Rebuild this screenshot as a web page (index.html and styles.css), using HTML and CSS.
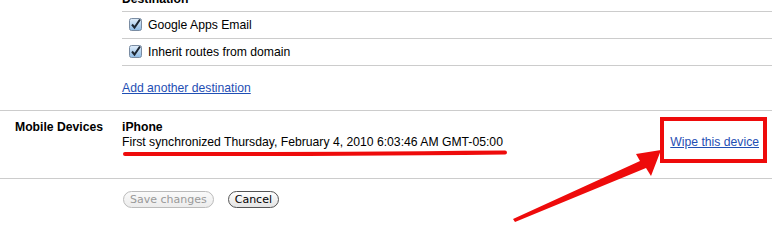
FILE: index.html
```html
<!DOCTYPE html>
<html lang="en">
<head>
    <meta charset="UTF-8">
    <title>Mobile Devices - Settings</title>
    <link rel="stylesheet" href="styles.css">
</head>
<body>
    <div class="page">
        <div class="section section-dest">
            <div class="label"></div>
            <div class="content">
                <div class="dest-head">Destination</div>
                <div class="dest-row">
                    <svg class="check" width="13" height="13" viewBox="0 0 13 13">
                        <defs>
                            <linearGradient id="cb" x1="0" y1="0" x2="0" y2="1">
                                <stop offset="0" stop-color="#e2eefa"/>
                                <stop offset="1" stop-color="#8dbbe6"/>
                            </linearGradient>
                        </defs>
                        <rect x="0.5" y="0.5" width="12" height="12" rx="2" fill="url(#cb)" stroke="#7a8ca2"/>
                        <path d="M3 6.5 L5.5 9.5 L11 1.5" fill="none" stroke="#1d2733" stroke-width="2"/>
                    </svg>
                    <span>Google Apps Email</span>
                </div>
                <div class="dest-row">
                    <svg class="check" width="13" height="13" viewBox="0 0 13 13">
                        <rect x="0.5" y="0.5" width="12" height="12" rx="2" fill="url(#cb)" stroke="#7a8ca2"/>
                        <path d="M3 6.5 L5.5 9.5 L11 1.5" fill="none" stroke="#1d2733" stroke-width="2"/>
                    </svg>
                    <span>Inherit routes from domain</span>
                </div>
                <div class="add-row">
                    <a href="#">Add another destination</a>
                </div>
            </div>
        </div>

        <div class="section section-mobile">
            <div class="label">Mobile Devices</div>
            <div class="content device">
                <div class="device-info">
                    <div class="device-name">iPhone</div>
                    <div>First synchronized Thursday, February 4, 2010 6:03:46 AM GMT-05:00</div>
                </div>
                <a class="wipe" href="#">Wipe this device</a>
            </div>
        </div>

        <div class="actions">
            <button class="btn" disabled>Save changes</button>
            <button class="btn">Cancel</button>
        </div>
    </div>

    <!-- annotation drawn over the screenshot -->
    <svg class="markup" width="772" height="248" viewBox="0 0 772 248">
        <path d="M125 154 Q300 154.5 505 152.5" fill="none" stroke="#ee0b0b" stroke-width="4" stroke-linecap="round"/>
        <rect x="662" y="119" width="103" height="42" fill="none" stroke="#ee0b0b" stroke-width="4"/>
        <polygon points="513,219 640,161 636,154 661,150 651,176 646,168 515,222" fill="#ee0b0b"/>
    </svg>
</body>
</html>
```

FILE: styles.css
```css
body {
    margin: 0;
    background: white;
    font-family: "Liberation Sans", Arial, sans-serif;
    font-size: 12.2px;
    color: #000;
    position: relative;
    overflow: hidden;
    height: 248px;
}
a {
    color: #1f4fb4;
}
.section {
    display: flex;
}
.label {
    width: 122px;
    flex: none;
    box-sizing: border-box;
    padding-left: 15px;
    font-weight: bold;
}
.content {
    flex: 1;
}
.dest-head {
    margin-top: -9px;
    line-height: 16px;
    padding-bottom: 4px;
    font-weight: bold;
    border-bottom: 1px solid #ccc;
}
.dest-row {
    display: flex;
    align-items: center;
    gap: 6px;
    height: 26px;
    padding-left: 7px;
    border-bottom: 1px solid #ccc;
}
.check {
    display: block;
    margin-top: -1px;
}
.add-row {
    height: 44px;
    display: flex;
    align-items: center;
}
.section-mobile {
    border-top: 1px solid #ccc;
    border-bottom: 1px solid #ccc;
    padding: 9px 0 28px;
    line-height: 15px;
}
.device {
    display: flex;
    justify-content: space-between;
}
.device-name {
    font-weight: bold;
}
.wipe {
    margin-top: 15px;
    margin-right: 13px;
}
.actions {
    display: flex;
    gap: 14px;
    padding: 12px 0 0 123px;
}
.btn {
    font-family: "DejaVu Sans", sans-serif;
    font-size: 11px;
    height: 17px;
    line-height: 13px;
    padding: 0 6px;
    margin: 0;
    border-radius: 9px;
    border: 1px solid #555;
    background: linear-gradient(#ffffff, #e4e4e4);
    color: #000;
}
.btn:disabled {
    color: #999;
    border-color: #bbb;
    background: linear-gradient(#fafafa, #ececec);
}
.markup {
    position: absolute;
    left: 0;
    top: 0;
    pointer-events: none;
}
```
